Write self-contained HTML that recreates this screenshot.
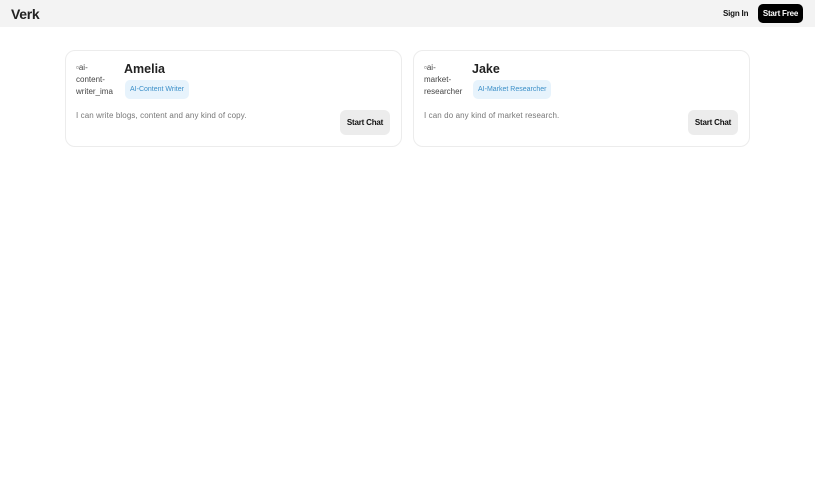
<!DOCTYPE html>
<html><head><style>
*{margin:0;padding:0;box-sizing:border-box}
body{width:815px;height:480px;background:#fff;font-family:"Liberation Sans",sans-serif;color:#111;position:relative;overflow:hidden}
.hdr{position:absolute;left:0;top:0;width:815px;height:27px;background:#f3f3f3}
.logo{position:absolute;left:11px;top:6px;font-size:14px;font-weight:bold;color:#222;letter-spacing:-0.3px}
.signin{position:absolute;left:723px;top:9px;font-size:8px;font-weight:bold;letter-spacing:-0.2px}
.free{position:absolute;left:758px;top:4px;width:45px;height:19px;background:#000;color:#fff;border-radius:5px;font-size:8px;font-weight:bold;text-align:center;line-height:19px;letter-spacing:-0.2px}
.card{position:absolute;top:50px;width:337px;height:97px;border:1px solid #ececec;border-radius:10px;background:#fff}
.img{position:absolute;left:10px;top:11px;width:40px;font-size:8px;line-height:12px;color:#444;overflow:hidden;height:36px}
.name{position:absolute;left:58px;top:11px;font-size:12.5px;font-weight:bold;color:#222}
.badge{position:absolute;left:59px;top:29px;height:19px;padding:0 5px;background:#e7f3fc;border-radius:5px;color:#3b8fc8;font-size:7px;line-height:19px}
.desc{position:absolute;left:10px;top:60px;font-size:8px;color:#777;letter-spacing:0.1px}
.btn{position:absolute;right:11px;top:59px;width:50px;height:25px;background:#ececec;border-radius:6px;font-size:8px;font-weight:bold;text-align:center;line-height:25px;letter-spacing:-0.2px}
</style></head><body>
<div class="hdr"><div class="logo">Verk</div><div class="signin">Sign In</div><div class="free">Start Free</div></div>
<div class="card" style="left:65px"><div class="img">▫ai-<br>content-<br>writer_ima</div><div class="name">Amelia</div><div class="badge">AI-Content Writer</div><div class="desc">I can write blogs, content and any kind of copy.</div><div class="btn">Start Chat</div></div>
<div class="card" style="left:413px"><div class="img">▫ai-<br>market-<br>researcher</div><div class="name">Jake</div><div class="badge">AI-Market Researcher</div><div class="desc">I can do any kind of market research.</div><div class="btn">Start Chat</div></div>
</body></html>
